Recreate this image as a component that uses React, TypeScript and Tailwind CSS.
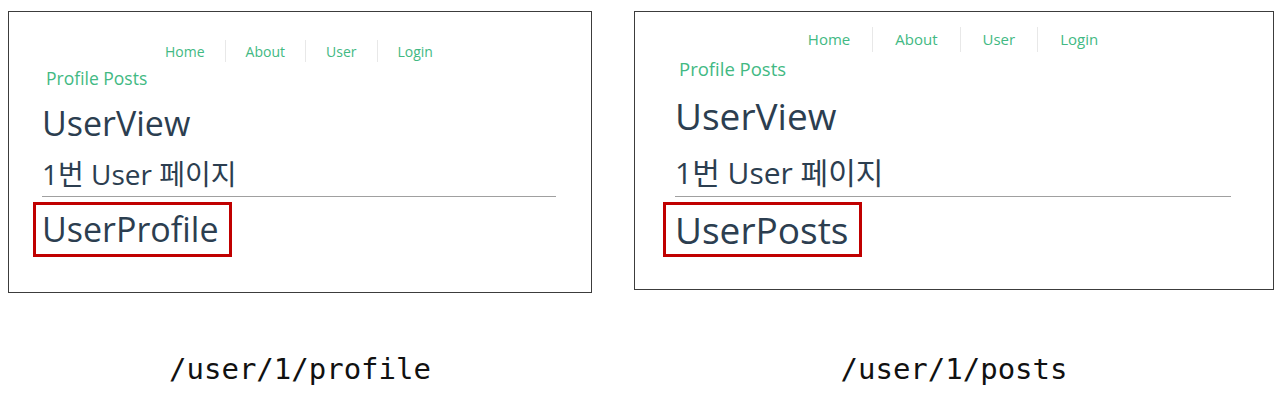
import { type FC } from 'react';

const sans = 'font-["Open_Sans","Noto_Sans_CJK_KR",sans-serif]';

const NavLink: FC<{ label: string; first?: boolean; cls: string }> = ({ label, first, cls }) => (
  <span className={`${cls} flex items-center ${first ? '' : 'border-l border-[#e8e8e8]'}`}>{label}</span>
);

const LeftScreen: FC = () => (
  <div className={`h-[282px] w-[584px] border border-[#3c3c3c] bg-white pl-[33px] pr-[35px] pt-[28px] ${sans}`}>
    <nav className="flex h-[22px] justify-center text-[14px] text-[#42b983]">
      <NavLink label="Home" first cls="px-[20px]" />
      <NavLink label="About" cls="px-[20px]" />
      <NavLink label="User" cls="px-[20px]" />
      <NavLink label="Login" cls="px-[20px]" />
    </nav>
    <div className="mt-[6px] pl-[4px] text-[17.5px] leading-[20px] text-[#42b983]">
      <span>Profile</span> <span>Posts</span>
    </div>
    <h1 className="mt-[15px] text-[34px] leading-[40px] text-[#2c3e50]">UserView</h1>
    <h2 className="mt-[14px] text-[28px] leading-[34px] text-[#2c3e50]">1번 User 페이지</h2>
    <hr className="mt-[5px] border-t border-[#a0a0a0]" />
    <div className="ml-[-9px] mt-[5px] inline-block border-[3px] border-[#c00000] pl-[6px] pr-[11px]">
      <h1 className="text-[34px] leading-[49px] text-[#2c3e50]">UserProfile</h1>
    </div>
  </div>
);

const RightScreen: FC = () => (
  <div className={`h-[279px] w-[640px] border border-[#3c3c3c] bg-white pl-[40px] pr-[42px] pt-[15px] ${sans}`}>
    <nav className="flex h-[25px] justify-center text-[15px] text-[#42b983]">
      <NavLink label="Home" first cls="px-[22px]" />
      <NavLink label="About" cls="px-[22px]" />
      <NavLink label="User" cls="px-[22px]" />
      <NavLink label="Login" cls="px-[22px]" />
    </nav>
    <div className="mt-[6px] pl-[4px] text-[18.5px] leading-[22px] text-[#42b983]">
      <span>Profile</span> <span>Posts</span>
    </div>
    <h1 className="mt-[14px] text-[37px] leading-[44px] text-[#2c3e50]">UserView</h1>
    <h2 className="mt-[17px] text-[30px] leading-[36px] text-[#2c3e50]">1번 User 페이지</h2>
    <hr className="mt-[5px] border-t border-[#a0a0a0]" />
    <div className="ml-[-12px] mt-[5px] inline-block border-[3px] border-[#c00000] pl-[9px] pr-[11px]">
      <h1 className="text-[37px] leading-[49px] text-[#2c3e50]">UserPosts</h1>
    </div>
  </div>
);

const App: FC = () => {
  return (
    <div className="flex h-[403px] w-[1284px] bg-white pt-[11px]">
      <div className="ml-[8px] w-[584px]">
        <LeftScreen />
        <div className='mt-[58px] text-center font-["DejaVu_Sans_Mono",monospace] text-[29px] leading-[36px] text-[#111]'>
          /user/1/profile
        </div>
      </div>
      <div className="ml-[42px] w-[640px]">
        <RightScreen />
        <div className='mt-[61px] text-center font-["DejaVu_Sans_Mono",monospace] text-[29px] leading-[36px] text-[#111]'>
          /user/1/posts
        </div>
      </div>
    </div>
  );
};

export default App;
